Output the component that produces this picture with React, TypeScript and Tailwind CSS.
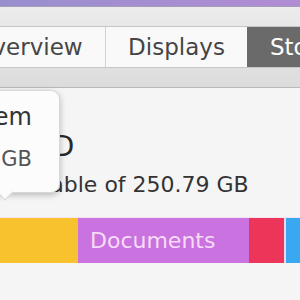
const font = { fontFamily: '"DejaVu Sans", "Liberation Sans", sans-serif' };

export default function App() {
  return (
    <div className="w-[300px] h-[300px] overflow-hidden bg-[#f5f5f5] relative" style={font}>
      {/* desktop strip */}
      <div className="h-[6px] bg-gradient-to-r from-[#988fcf] to-[#b18cd4]" />
      <div className="h-px bg-[#a59cb8]" />

      {/* toolbar */}
      <div className="h-[81px] bg-gradient-to-b from-[#ececec] to-[#dcdcdc] border-b border-[#b9b9b9] pt-[19px]">
        <div className="flex h-[42px] ml-[-49px] w-[450px] border border-[#c6c6c6] bg-[#f9f9f9] text-[23px] leading-none">
          <div className="w-[154px] shrink-0 flex items-center justify-center text-[#454545] border-r border-[#d2d2d2]">
            Overview
          </div>
          <div className="w-[141px] shrink-0 flex items-center justify-center text-[#454545]">
            Displays
          </div>
          <div className="w-[150px] shrink-0 flex items-center pl-[23px] bg-[#6a6a6a] text-white">
            Storage
          </div>
        </div>
      </div>

      {/* disk info */}
      <div className="ml-[-120px] pt-[45px] text-[#2a2a2a]">
        <div className="text-[28px] leading-[28px] whitespace-nowrap">Macintosh HD</div>
        <div className="mt-[13px] ml-[-5px] text-[22px] leading-[22px] whitespace-nowrap text-[#333]">
          170.21 GB available of 250.79 GB
        </div>
      </div>

      {/* storage bar */}
      <div className="mt-[21px] border-t border-[#f3e4ef] h-[46px] flex">
        <div className="w-[78px] bg-[#f8c22f]" />
        <div className="w-[171px] bg-[#ca72df] flex items-center pl-[12px] text-[22px] text-[#f7dcf9] leading-none">
          Documents
        </div>
        <div className="w-[35px] bg-[#ec3559]" />
        <div className="w-[2px] bg-[#f1d6e6]" />
        <div className="flex-1 bg-[#3aa7f1]" />
      </div>

      {/* tooltip */}
      <div className="absolute left-[-80px] top-[90px] w-[140px] h-[103px] bg-[#fcfcfc] rounded-[9px] border border-[#d8d8d8] shadow-[0_2px_6px_rgba(0,0,0,0.25)] text-right pr-[27px] pt-[14px] text-[#333]">
        <div className="text-[24px] leading-[24px]">System</div>
        <div className="mt-[20px] text-[21px] leading-[21px] text-[#555]">24.3 GB</div>
        <div className="absolute left-[78px] bottom-[-6px] w-[12px] h-[12px] rotate-45 bg-[#fcfcfc] border-r border-b border-[#d8d8d8]" />
      </div>
    </div>
  );
}
